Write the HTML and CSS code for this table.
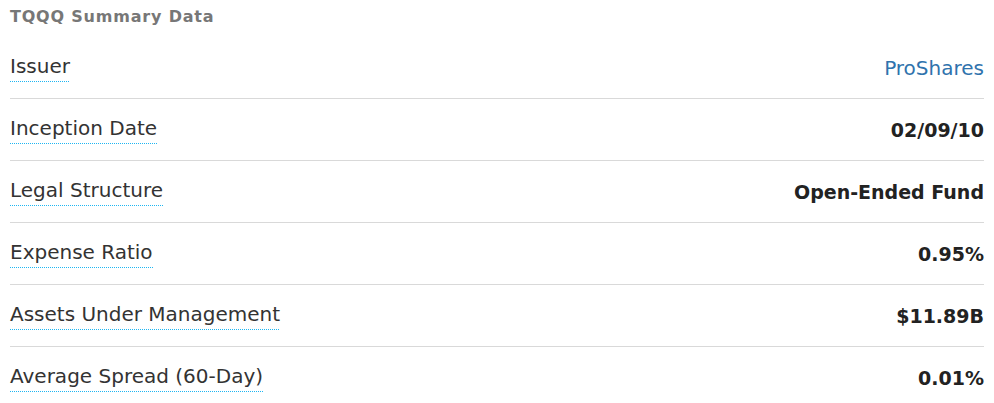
FILE: index.html
```html
<!DOCTYPE html>
<html>
<head>
<meta charset="utf-8">
<link rel="stylesheet" href="styles.css">
</head>
<body>
<div class="summary">
  <h3 class="title">TQQQ Summary Data</h3>
  <div class="row"><span class="label">Issuer</span><a class="value link">ProShares</a></div>
  <div class="row"><span class="label">Inception Date</span><span class="value">02/09/10</span></div>
  <div class="row"><span class="label">Legal Structure</span><span class="value">Open-Ended Fund</span></div>
  <div class="row"><span class="label">Expense Ratio</span><span class="value">0.95%</span></div>
  <div class="row"><span class="label">Assets Under Management</span><span class="value">$11.89B</span></div>
  <div class="row last"><span class="label">Average Spread (60-Day)</span><span class="value">0.01%</span></div>
</div>
</body>
</html>
```
FILE: styles.css
```css
body {
  margin: 0;
  background: #fff;
  font-family: "DejaVu Sans", sans-serif;
}
.summary {
  padding: 0 10px;
}
.title {
  margin: 0 0 9px;
  padding-top: 6px;
  font-size: 16px;
  letter-spacing: 0.8px;
  font-weight: 700;
  color: #777;
  line-height: 22px;
}
.row {
  display: flex;
  justify-content: space-between;
  align-items: center;
  height: 61px;
  border-bottom: 1px solid #d9d9d9;
}
.row.last { border-bottom: none; }
.label {
  font-size: 20px;
  color: #333;
  padding-bottom: 3px;
  line-height: 26px;
  background-image: linear-gradient(to right, #1eb6f2 50%, transparent 50%);
  background-size: 2px 1px;
  background-repeat: repeat-x;
  background-position: left bottom;
}
.value {
  font-size: 19px;
  font-weight: 700;
  color: #222;
}
.link {
  font-size: 20px;
  font-weight: 400;
  color: #2f73ad;
}
```
